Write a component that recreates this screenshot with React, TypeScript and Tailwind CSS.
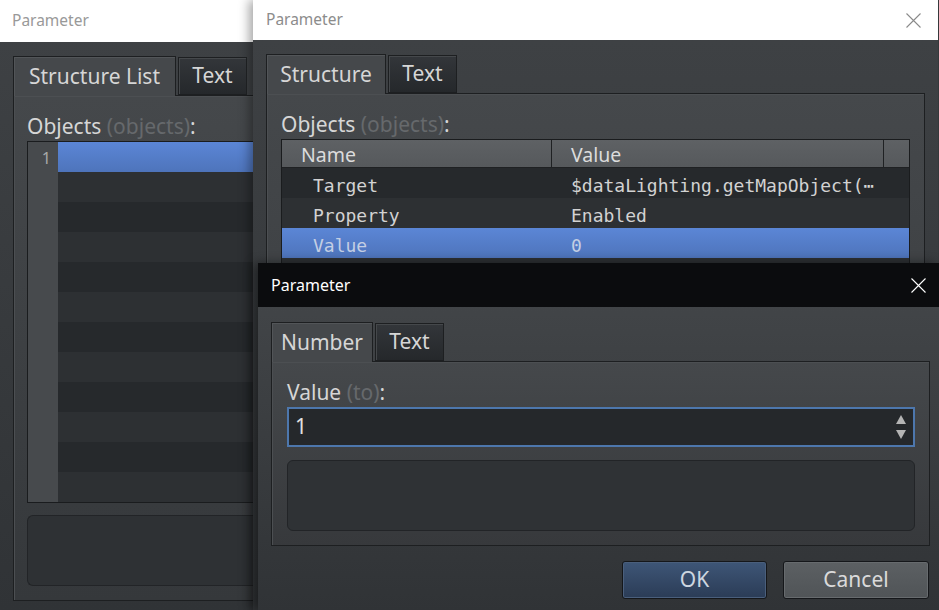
import React from 'react';

const SANS = "font-['Noto_Sans','Open_Sans',sans-serif]";
const MONO = "font-['DejaVu_Sans_Mono','Liberation_Mono',monospace]";

interface TabDef {
  readonly label: string;
  readonly width: string;
}

function CloseX({ stroke }: { stroke: string }) {
  return (
    <svg width="15" height="15" viewBox="0 0 15 15" className="shrink-0">
      <path d="M0.5 0.5 L14.5 14.5 M14.5 0.5 L0.5 14.5" stroke={stroke} strokeWidth="1.1" fill="none" />
    </svg>
  );
}

function TabStrip({ tabs }: { tabs: TabDef[] }) {
  return (
    <div className="relative z-10 -mb-px flex items-start gap-[2px]">
      {tabs.map((tab, i) =>
        i === 0 ? (
          <div
            key={tab.label}
            className={`${tab.width} h-[40px] border border-b-0 border-[#1d1f21] bg-[#45484b] shadow-[inset_1px_1px_0_#525558] flex items-center justify-center text-[21px] text-[#d6d6d6]`}
          >
            {tab.label}
          </div>
        ) : (
          <div
            key={tab.label}
            className={`${tab.width} mt-px h-[38px] border border-[#1d1f21] bg-gradient-to-b from-[#33363a] to-[#25282b] shadow-[inset_1px_1px_0_#45484b] flex items-center justify-center text-[21px] text-[#d6d6d6]`}
          >
            {tab.label}
          </div>
        ),
      )}
    </div>
  );
}

function Label({ main, hint }: { main: string; hint: string }) {
  return (
    <div className="h-[26px] leading-[28px] text-[21px] text-[#d6d6d6]">
      {main} <span className="text-[#66696c]">({hint})</span>:
    </div>
  );
}

function BackWindow() {
  const rows = Array.from({ length: 12 }, (_, i) => i);
  return (
    <div className={`${SANS} absolute left-0 top-0 w-[300px] h-[610px] flex flex-col bg-gradient-to-b from-[#3f4245] to-[#303336]`}>
      <div className="h-[42px] shrink-0 bg-white flex items-center pl-[12px] text-[15.5px] text-[#999999]">Parameter</div>
      <div className="pl-[13px] pt-[14px] flex flex-col">
        <TabStrip tabs={[{ label: 'Structure List', width: 'w-[163px]' }, { label: 'Text', width: 'w-[69px]' }]} />
        <div className="h-[506px] border border-r-0 border-[#1d1f21] shadow-[inset_1px_1px_0_#4c4f52] bg-gradient-to-b from-[#45484b] to-[#35383b] pl-[13px] pt-[16px] flex flex-col">
          <Label main="Objects" hint="objects" />
          <div className="mt-[3px] border border-r-0 border-[#1a1c1e] flex flex-col">
            {rows.map(i => (
              <div key={i} className="h-[30px] flex">
                <div className="w-[30px] bg-[#474a4d] text-right pr-[7px] pt-[2px] leading-[28px] text-[16px] text-[#a8a8a8]">
                  {i === 0 ? '1' : ''}
                </div>
                <div
                  className={
                    i === 0
                      ? 'flex-1 bg-gradient-to-b from-[#5b86d6] to-[#4e74bb]'
                      : i % 2 === 0
                        ? 'flex-1 bg-[#26292c]'
                        : 'flex-1 bg-[#2d3033]'
                  }
                />
              </div>
            ))}
          </div>
          <div className="mt-[12px] h-[71px] rounded-l-[6px] border border-r-0 border-[#222427] bg-[#2e3134]" />
        </div>
      </div>
    </div>
  );
}

const TABLE_ROWS = [
  { name: 'Target', value: '$dataLighting.getMapObject(⋯' },
  { name: 'Property', value: 'Enabled' },
  { name: 'Value', value: '0' },
];

function MiddleWindow() {
  return (
    <div className={`${SANS} absolute left-[253px] top-0 w-[685px] h-[610px] flex flex-col bg-gradient-to-b from-[#3f4245] to-[#303336] shadow-[-4px_0_10px_rgba(0,0,0,0.35)]`}>
      <div className="h-[40px] shrink-0 bg-white flex items-center justify-between pl-[13px] pr-[17px] text-[15.5px] text-[#8c8c8c]">
        <span>Parameter</span>
        <CloseX stroke="#8a8a8a" />
      </div>
      <div className="px-[13px] pt-[14px] flex flex-col">
        <TabStrip tabs={[{ label: 'Structure', width: 'w-[120px]' }, { label: 'Text', width: 'w-[69px]' }]} />
        <div className="h-[520px] border border-[#1d1f21] shadow-[inset_1px_1px_0_#4c4f52] bg-gradient-to-b from-[#45484b] to-[#35383b] px-[14px] pt-[16px] flex flex-col">
          <Label main="Objects" hint="objects" />
          <div className="mt-[3px] border border-[#1a1c1e] flex flex-col">
            <div className="h-[28px] flex bg-gradient-to-b from-[#5e6164] to-[#56595c] border-b border-[#1f2123] text-[19.5px] text-[#dcdcdc] leading-[30px]">
              <div className="w-[270px] pl-[19px] border-r border-[#1f2123]">Name</div>
              <div className="flex-1 pl-[19px] border-r border-[#1f2123]">Value</div>
              <div className="w-[25px]" />
            </div>
            {TABLE_ROWS.map((row, i) => (
              <div
                key={row.name}
                className={`${MONO} h-[30px] flex pt-[6px] leading-[24px] text-[18px] ${
                  i === 2
                    ? 'bg-gradient-to-b from-[#5b86d6] to-[#4e74bb] text-[#c4cfe4]'
                    : i % 2 === 0
                      ? 'bg-[#26292c] text-[#d2d2d2]'
                      : 'bg-[#2d3033] text-[#d2d2d2]'
                }`}
              >
                <div className="w-[270px] pl-[31px]">{row.name}</div>
                <div className="flex-1 pl-[19px] whitespace-nowrap overflow-hidden">{row.value}</div>
              </div>
            ))}
            <div className="h-[30px] bg-[#2d3033]" />
          </div>
        </div>
      </div>
    </div>
  );
}

function Spinner() {
  return (
    <svg width="12" height="26" viewBox="0 0 12 26" className="shrink-0">
      <path d="M6 1 L11 10 L1 10 Z" fill="#b4b4b4" />
      <path d="M1 16 L11 16 L6 25 Z" fill="#b4b4b4" />
    </svg>
  );
}

function FrontWindow() {
  return (
    <div className={`${SANS} absolute left-[258px] top-[263px] w-[681px] h-[347px] flex flex-col bg-gradient-to-b from-[#44474a] to-[#303336] shadow-[-4px_0_10px_rgba(0,0,0,0.45)]`}>
      <div className="h-[44px] shrink-0 bg-[#0b0c0e] flex items-center justify-between pl-[13px] pr-[13px] text-[16px] text-white">
        <span>Parameter</span>
        <CloseX stroke="#ffffff" />
      </div>
      <div className="pl-[13px] pr-[9px] pt-[15px] flex flex-col">
        <TabStrip tabs={[{ label: 'Number', width: 'w-[102px]' }, { label: 'Text', width: 'w-[69px]' }]} />
        <div className="h-[185px] border border-[#1d1f21] shadow-[inset_1px_1px_0_#4c4f52] bg-gradient-to-b from-[#45484b] to-[#37393c] pl-[15px] pr-[14px] pt-[16px] flex flex-col">
          <Label main="Value" hint="to" />
          <div className="mt-[3px] h-[40px] border-2 border-[#4d77ad] bg-[#25282b] flex items-center justify-between pl-[6px] pr-[6px]">
            <span className="text-[21px] text-[#e0e0e0]">1</span>
            <Spinner />
          </div>
          <div className="mt-[13px] h-[71px] rounded-[6px] border border-[#222427] bg-[#2f3235]" />
        </div>
        <div className="mt-[15px] mr-px flex justify-end gap-[16px]">
          <div className="w-[145px] h-[38px] rounded-[3px] border border-[#15171a] bg-gradient-to-b from-[#3e5677] to-[#2b3c56] shadow-[inset_0_0_0_1px_#4a5f7c] flex items-center justify-center text-[21px] text-[#cdd6e0]">
            OK
          </div>
          <div className="w-[146px] h-[38px] rounded-[3px] border border-[#15171a] bg-gradient-to-b from-[#5c6063] to-[#505457] shadow-[inset_0_0_0_1px_#676b6e] flex items-center justify-center text-[21px] text-[#dadada]">
            Cancel
          </div>
        </div>
      </div>
    </div>
  );
}

export default function App() {
  return (
    <div className="relative w-[939px] h-[610px] overflow-hidden bg-[#3a3d40]">
      <BackWindow />
      <MiddleWindow />
      <FrontWindow />
    </div>
  );
}
